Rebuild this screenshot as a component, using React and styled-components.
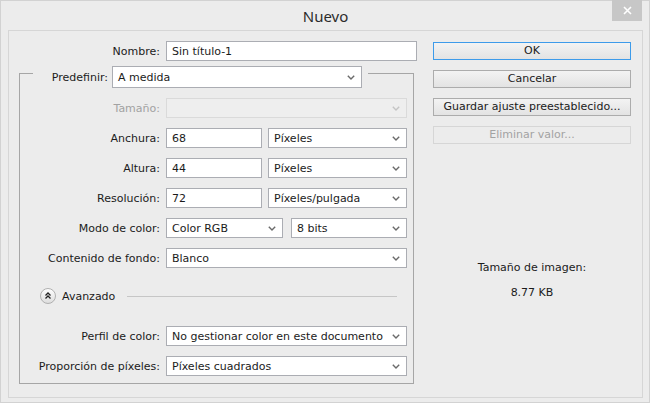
import React from 'react';
import styled, { createGlobalStyle } from 'styled-components';

const Global = createGlobalStyle`
  body {
    margin: 0;
    background: #ececec;
    font-family: "DejaVu Sans", sans-serif;
    font-size: 11px;
    color: #1b1b1b;
  }
`;

const Window = styled.div`
  width: 650px;
  height: 403px;
  box-sizing: border-box;
  border: 1px solid #d2d2d2;
  background: #ececec;
  display: flex;
  flex-direction: column;
  padding: 0 6px 4px 7px;
`;

const TitleBar = styled.div`
  height: 29px;
  display: grid;
  grid-template-columns: 1fr auto 1fr;
  align-items: start;
`;

const Title = styled.div`
  grid-column: 2;
  font-family: "Noto Sans", sans-serif;
  font-size: 15px;
  line-height: 31px;
  color: #2b2b2b;
`;

const CloseBtn = styled.div`
  grid-column: 3;
  justify-self: end;
  width: 30px;
  height: 21px;
  margin: -1px 1px 0 0;
  background: #c7c7c7;
  display: flex;
  align-items: center;
  justify-content: center;
`;

const Panel = styled.div`
  flex: 1;
  border: 1px solid #d6d6d6;
  display: flex;
`;

const LeftCol = styled.div`
  width: 408px;
  padding-top: 10px;
  display: flex;
  flex-direction: column;
`;

const NameRow = styled.div`
  display: grid;
  grid-template-columns: 151px 251px;
  column-gap: 6px;
  align-items: center;
`;

const Label = styled.div`
  text-align: right;
  white-space: nowrap;
  color: ${(p) => (p.disabled ? '#a2a2a2' : '#1b1b1b')};
`;

const Box = styled.div`
  box-sizing: border-box;
  height: ${(p) => p.h || 20}px;
  border: 1px solid ${(p) => (p.disabled ? '#dadada' : '#abadb3')};
  background: ${(p) => (p.disabled ? '#eeeeee' : '#fff')};
  padding: 0 6px 0 5px;
  display: flex;
  align-items: center;
  justify-content: space-between;
  white-space: nowrap;
  overflow: hidden;
`;

const Group = styled.div`
  margin: 12px 0 0 10px;
  width: 395px;
  box-sizing: border-box;
  border: 1px solid #a6a6a6;
  padding: 0 6px 7px 0;
  display: flex;
  flex-direction: column;
`;

const GroupHeader = styled.div`
  align-self: flex-start;
  margin: -8px 0 0 13px;
  padding-right: 6px;
  background: #ececec;
  display: grid;
  grid-template-columns: 75px 250px;
  column-gap: 4px;
  align-items: center;
`;

const Rows = styled.div`
  display: grid;
  grid-template-columns: 140px 241px;
  column-gap: 6px;
  row-gap: 10px;
  grid-auto-rows: 20px;
  align-items: center;
  margin-top: ${(p) => p.top}px;
`;

const Pair = styled.div`
  display: grid;
  grid-template-columns: ${(p) => p.first}px 1fr;
  column-gap: ${(p) => p.gap}px;
`;

const Advanced = styled.div`
  display: flex;
  align-items: center;
  height: 16px;
  margin: 20px 10px 0 20px;
  gap: 6px;
`;

const Rule = styled.div`
  flex: 1;
  height: 1px;
  background: #c6c6c6;
  margin-left: 6px;
`;

const RightCol = styled.div`
  width: 198px;
  margin-left: 16px;
  padding-top: 11px;
  display: flex;
  flex-direction: column;
  gap: 10px;
`;

const Button = styled.div`
  height: 18px;
  box-sizing: border-box;
  border: 1px solid ${(p) => (p.primary ? '#3d9bea' : p.disabled ? '#d6d6d6' : '#acacac')};
  background: ${(p) => (p.disabled ? '#ececec' : 'linear-gradient(#f3f3f3, #e3e3e3)')};
  color: ${(p) => (p.disabled ? '#a3a3a3' : '#1b1b1b')};
  text-align: center;
  line-height: 16px;
`;

const SizeInfo = styled.div`
  margin-top: 107px;
  text-align: center;
  line-height: 14px;
  display: flex;
  flex-direction: column;
  gap: 11px;
`;

const Chevron = ({ disabled }) => (
  <svg width="8" height="5" viewBox="0 0 8 5">
    <polyline points="0.8,0.8 4,4 7.2,0.8" fill="none" stroke={disabled ? '#c4c4c4' : '#6a6a6a'} strokeWidth="1.4" />
  </svg>
);

const Select = ({ value, h, disabled }) => (
  <Box h={h} disabled={disabled}>
    <span>{value}</span>
    <Chevron disabled={disabled} />
  </Box>
);

const Input = ({ value }) => <Box>{value}</Box>;

const CollapseIcon = () => (
  <svg width="16" height="16" viewBox="0 0 16 16">
    <defs>
      <linearGradient id="cg" x1="0" y1="0" x2="0" y2="1">
        <stop offset="0" stopColor="#ffffff" />
        <stop offset="1" stopColor="#dcdcdc" />
      </linearGradient>
    </defs>
    <circle cx="8" cy="8" r="7.5" fill="url(#cg)" stroke="#b0b0b0" />
    <polyline points="5.5,7.5 8,5 10.5,7.5" fill="none" stroke="#222" strokeWidth="1.3" />
    <polyline points="5.5,10.5 8,8 10.5,10.5" fill="none" stroke="#222" strokeWidth="1.3" />
  </svg>
);

export default function App() {
  return (
    <>
      <Global />
      <Window>
        <TitleBar>
          <Title>Nuevo</Title>
          <CloseBtn>
            <svg width="9" height="9" viewBox="0 0 9 9">
              <path d="M1 1 L8 8 M8 1 L1 8" stroke="#fff" strokeWidth="1.6" />
            </svg>
          </CloseBtn>
        </TitleBar>
        <Panel>
          <LeftCol>
            <NameRow>
              <Label>Nombre:</Label>
              <Input value="Sin título-1" />
            </NameRow>
            <Group>
              <GroupHeader>
                <Label>Predefinir:</Label>
                <Select value="A medida" h={22} />
              </GroupHeader>
              <Rows top={10}>
                <Label disabled>Tamaño:</Label>
                <Select value="" disabled />
                <Label>Anchura:</Label>
                <Pair first={96} gap={6}>
                  <Input value="68" />
                  <Select value="Píxeles" />
                </Pair>
                <Label>Altura:</Label>
                <Pair first={96} gap={6}>
                  <Input value="44" />
                  <Select value="Píxeles" />
                </Pair>
                <Label>Resolución:</Label>
                <Pair first={96} gap={6}>
                  <Input value="72" />
                  <Select value="Píxeles/pulgada" />
                </Pair>
                <Label>Modo de color:</Label>
                <Pair first={117} gap={8}>
                  <Select value="Color RGB" />
                  <Select value="8 bits" />
                </Pair>
                <Label>Contenido de fondo:</Label>
                <Select value="Blanco" />
              </Rows>
              <Advanced>
                <CollapseIcon />
                <span>Avanzado</span>
                <Rule />
              </Advanced>
              <Rows top={22}>
                <Label>Perfil de color:</Label>
                <Select value="No gestionar color en este documento" />
                <Label>Proporción de píxeles:</Label>
                <Select value="Píxeles cuadrados" />
              </Rows>
            </Group>
          </LeftCol>
          <RightCol>
            <Button primary>OK</Button>
            <Button>Cancelar</Button>
            <Button>Guardar ajuste preestablecido...</Button>
            <Button disabled>Eliminar valor...</Button>
            <SizeInfo>
              <div>Tamaño de imagen:</div>
              <div>8.77 KB</div>
            </SizeInfo>
          </RightCol>
        </Panel>
      </Window>
    </>
  );
}
